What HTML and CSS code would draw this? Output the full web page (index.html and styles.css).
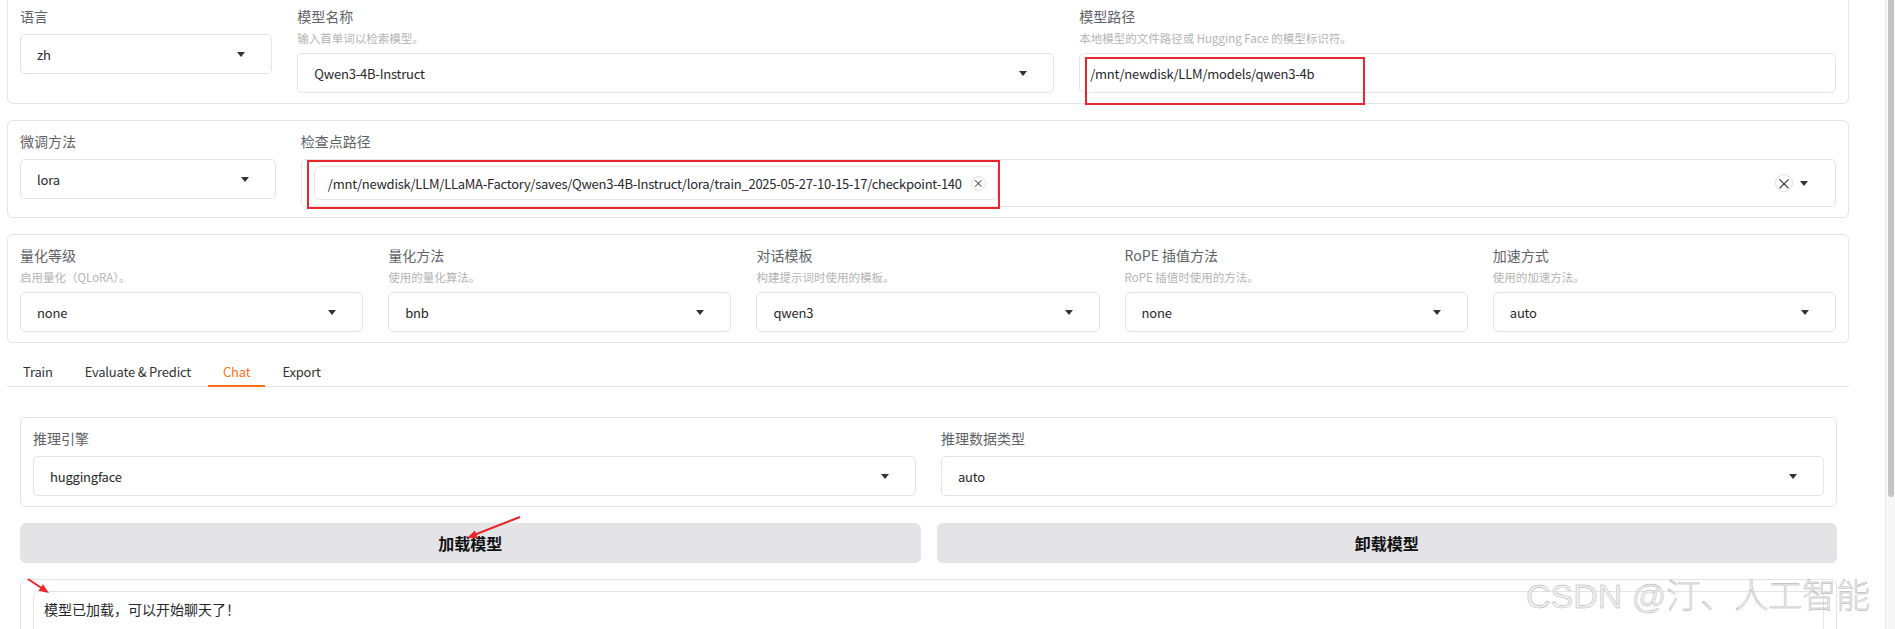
FILE: index.html
```html
<!DOCTYPE html>
<html>
<head>
<meta charset="utf-8" />
<meta name="viewport" content="width=device-width, initial-scale=1" />
<title>LLaMA Board</title>
<link rel="stylesheet" href="styles.css">
</head>
<body>

<div class="app">
	<div class="panel topPanel cols-1-3-3">
		<div class="field">
			<div class="label">语言</div>
			<div class="select"><span>zh</span><span class="caret"></span></div>
		</div>
		<div class="field">
			<div class="label withInfo">模型名称</div>
			<div class="info">输入首单词以检索模型。</div>
			<div class="select"><span>Qwen3-4B-Instruct</span><span class="caret"></span></div>
		</div>
		<div class="field">
			<div class="label withInfo">模型路径</div>
			<div class="info">本地模型的文件路径或 Hugging Face 的模型标识符。</div>
			<div class="textInput">/mnt/newdisk/LLM/models/qwen3-4b</div>
		</div>
	</div>

	<div class="panel cols-1-6">
		<div class="field">
			<div class="label">微调方法</div>
			<div class="select"><span>lora</span><span class="caret"></span></div>
		</div>
		<div class="field">
			<div class="label">检查点路径</div>
			<div class="multiSelect">
				<div class="chip">
					<span>/mnt/newdisk/LLM/LLaMA-Factory/saves/Qwen3-4B-Instruct/lora/train_2025-05-27-10-15-17/checkpoint-140</span>
					<span class="chipClose">×</span>
				</div>
				<div class="multiControls">
					<span class="clearAll">×</span>
					<span class="caret"></span>
				</div>
			</div>
		</div>
	</div>

	<div class="panel cols-5">
		<div class="field">
			<div class="label withInfo">量化等级</div>
			<div class="info">启用量化（QLoRA）。</div>
			<div class="select"><span>none</span><span class="caret"></span></div>
		</div>
		<div class="field">
			<div class="label withInfo">量化方法</div>
			<div class="info">使用的量化算法。</div>
			<div class="select"><span>bnb</span><span class="caret"></span></div>
		</div>
		<div class="field">
			<div class="label withInfo">对话模板</div>
			<div class="info">构建提示词时使用的模板。</div>
			<div class="select"><span>qwen3</span><span class="caret"></span></div>
		</div>
		<div class="field">
			<div class="label withInfo">RoPE 插值方法</div>
			<div class="info">RoPE 插值时使用的方法。</div>
			<div class="select"><span>none</span><span class="caret"></span></div>
		</div>
		<div class="field">
			<div class="label withInfo">加速方式</div>
			<div class="info">使用的加速方法。</div>
			<div class="select"><span>auto</span><span class="caret"></span></div>
		</div>
	</div>

	<div class="tabs">
		<div class="tabNav">
			<button class="tab">Train</button>
			<button class="tab">Evaluate &amp; Predict</button>
			<button class="tab selected">Chat</button>
			<button class="tab">Export</button>
		</div>

		<div class="tabContent">
			<div class="panel cols-2">
				<div class="field">
					<div class="label">推理引擎</div>
					<div class="select"><span>huggingface</span><span class="caret"></span></div>
				</div>
				<div class="field">
					<div class="label">推理数据类型</div>
					<div class="select"><span>auto</span><span class="caret"></span></div>
				</div>
			</div>

			<div class="buttonRow">
				<button class="bigButton">加载模型</button>
				<button class="bigButton">卸载模型</button>
			</div>

			<div class="panel infoPanel">
				<div class="textArea">模型已加载，可以开始聊天了！</div>
			</div>
		</div>
	</div>
</div>

<div class="scrollbar">
	<div class="thumb"></div>
</div>

<svg class="marks" xmlns="http://www.w3.org/2000/svg" width="1895" height="629" viewBox="0 0 1895 629">
	<rect x="1086" y="58" width="278" height="46" fill="none" stroke="#e8262b" stroke-width="2"/>
	<rect x="308" y="161" width="691" height="47" fill="none" stroke="#e8262b" stroke-width="2"/>
	<line x1="520" y1="517" x2="474" y2="535" stroke="#e8262b" stroke-width="2"/>
	<polygon points="467,538 477.8,538 474.8,530.6" fill="#e8262b"/>
	<line x1="28" y1="579" x2="43" y2="589" stroke="#e8262b" stroke-width="2"/>
	<polygon points="49,593 42.9,584.2 38.5,590.8" fill="#e8262b"/>
</svg>

<div class="watermark">CSDN @汀、人工智能</div>

</body>
</html>
```

FILE: styles.css
```css
html, body {
	margin: 0;
	padding: 0;
	width: 100%;
	height: 100%;
	overflow: hidden;
	background: #fff;
	font-family: "Noto Sans CJK SC", "Noto Sans", sans-serif;
	font-size: 14px;
	color: #27272a;
}

body {
	display: flex;
	position: relative;
}

.app {
	flex: 1;
	min-width: 0;
	padding: 0 36px 0 7px;
	display: flex;
	flex-direction: column;
	gap: 16px;
}

.panel {
	border: 1px solid #e4e4e7;
	border-radius: 6px;
	padding: 10px 12px;
	display: grid;
	column-gap: 25px;
	align-items: start;
}

.topPanel {
	margin-top: -5px;
	border-top-left-radius: 0;
	border-top-right-radius: 0;
}

.cols-1-3-3 {
	grid-template-columns: 1fr 3fr 3fr;
}

.cols-1-6 {
	grid-template-columns: 1fr 6fr;
}

.cols-5 {
	grid-template-columns: repeat(5, 1fr);
}

.cols-2 {
	grid-template-columns: 1fr 1fr;
}

.field {
	display: flex;
	flex-direction: column;
	min-width: 0;
}

.label {
	color: #5f6368;
	font-size: 14px;
	line-height: 20px;
	margin-bottom: 8px;
}

.label.withInfo {
	margin-bottom: 4px;
}

.info {
	color: #b4b4b4;
	font-size: 11.5px;
	line-height: 16px;
	margin-bottom: 7px;
	white-space: nowrap;
}

.select,
.textInput {
	box-sizing: border-box;
	height: 40px;
	border: 1px solid #e4e4e7;
	border-radius: 5px;
	display: flex;
	align-items: center;
	justify-content: space-between;
	padding: 0 26px 0 16px;
	font-size: 13px;
	letter-spacing: -0.2px;
	white-space: nowrap;
}

.textInput {
	padding: 0 10px;
	justify-content: flex-start;
}

.caret {
	width: 0;
	height: 0;
	border-left: 4px solid transparent;
	border-right: 4px solid transparent;
	border-top: 5px solid #333;
}

.multiSelect {
	box-sizing: border-box;
	height: 48px;
	border: 1px solid #e4e4e7;
	border-radius: 5px;
	padding: 6px 27px 6px 12px;
	display: flex;
	align-items: center;
	justify-content: space-between;
}

.chip {
	display: flex;
	align-items: center;
	gap: 9px;
	height: 34px;
	box-sizing: border-box;
	padding: 0 11px 0 13px;
	border: 1px solid #e4e4e7;
	border-radius: 6px;
	font-size: 13px;
	letter-spacing: -0.25px;
	white-space: nowrap;
}

.chipClose {
	width: 15px;
	height: 15px;
	box-sizing: border-box;
	border: 1px solid #e0e0e0;
	border-radius: 50%;
	font-size: 11px;
	line-height: 12px;
	letter-spacing: 0;
	text-align: center;
	color: #333;
}

.multiControls {
	display: flex;
	align-items: center;
	gap: 7px;
}

.clearAll {
	width: 18px;
	height: 18px;
	box-sizing: border-box;
	border: 1px solid #e0e0e0;
	border-radius: 50%;
	font-size: 15px;
	line-height: 15px;
	text-align: center;
	color: #222;
}

.tabNav {
	display: flex;
	gap: 2px;
	padding-left: 1px;
	border-bottom: 1px solid #e4e4e7;
}

.tab {
	margin-bottom: -1px;
	padding: 3px 15px;
	border: none;
	border-bottom: 2px solid transparent;
	background: none;
	font-family: inherit;
	font-size: 13px;
	letter-spacing: -0.2px;
	line-height: 20px;
	color: #333;
}

.tab.selected {
	color: #f97316;
	border-bottom-color: #f97316;
}

.tabContent {
	padding: 30px 12px 0 13px;
	display: flex;
	flex-direction: column;
	gap: 16px;
}

.buttonRow {
	display: grid;
	grid-template-columns: 1fr 1fr;
	gap: 16px;
}

.bigButton {
	height: 40px;
	border: none;
	border-radius: 6px;
	background: #e4e4e7;
	font-family: inherit;
	font-size: 16px;
	font-weight: bold;
	color: #111;
}

.infoPanel {
	padding-top: 11px;
}

.textArea {
	border: 1px solid #e4e4e7;
	border-radius: 5px;
	padding: 7px 10px 30px;
	line-height: 20px;
	color: #27272a;
}

.scrollbar {
	width: 9px;
	border-left: 1px solid #e6e6e6;
	background: #f7f7f7;
}

.thumb {
	height: 497px;
	margin: 0 1px 0 2px;
	background: #c4c4c4;
	border-radius: 0 0 4px 4px;
}

.marks {
	position: absolute;
	top: 0;
	left: 0;
	pointer-events: none;
}

.watermark {
	position: absolute;
	left: 1526px;
	top: 576px;
	font-family: "Liberation Sans", "Noto Sans CJK SC", sans-serif;
	font-size: 34px;
	font-weight: 300;
	line-height: 40px;
	white-space: nowrap;
	color: #efefef;
	-webkit-text-stroke: 0.4px #a8a8a8;
	pointer-events: none;
}
```
